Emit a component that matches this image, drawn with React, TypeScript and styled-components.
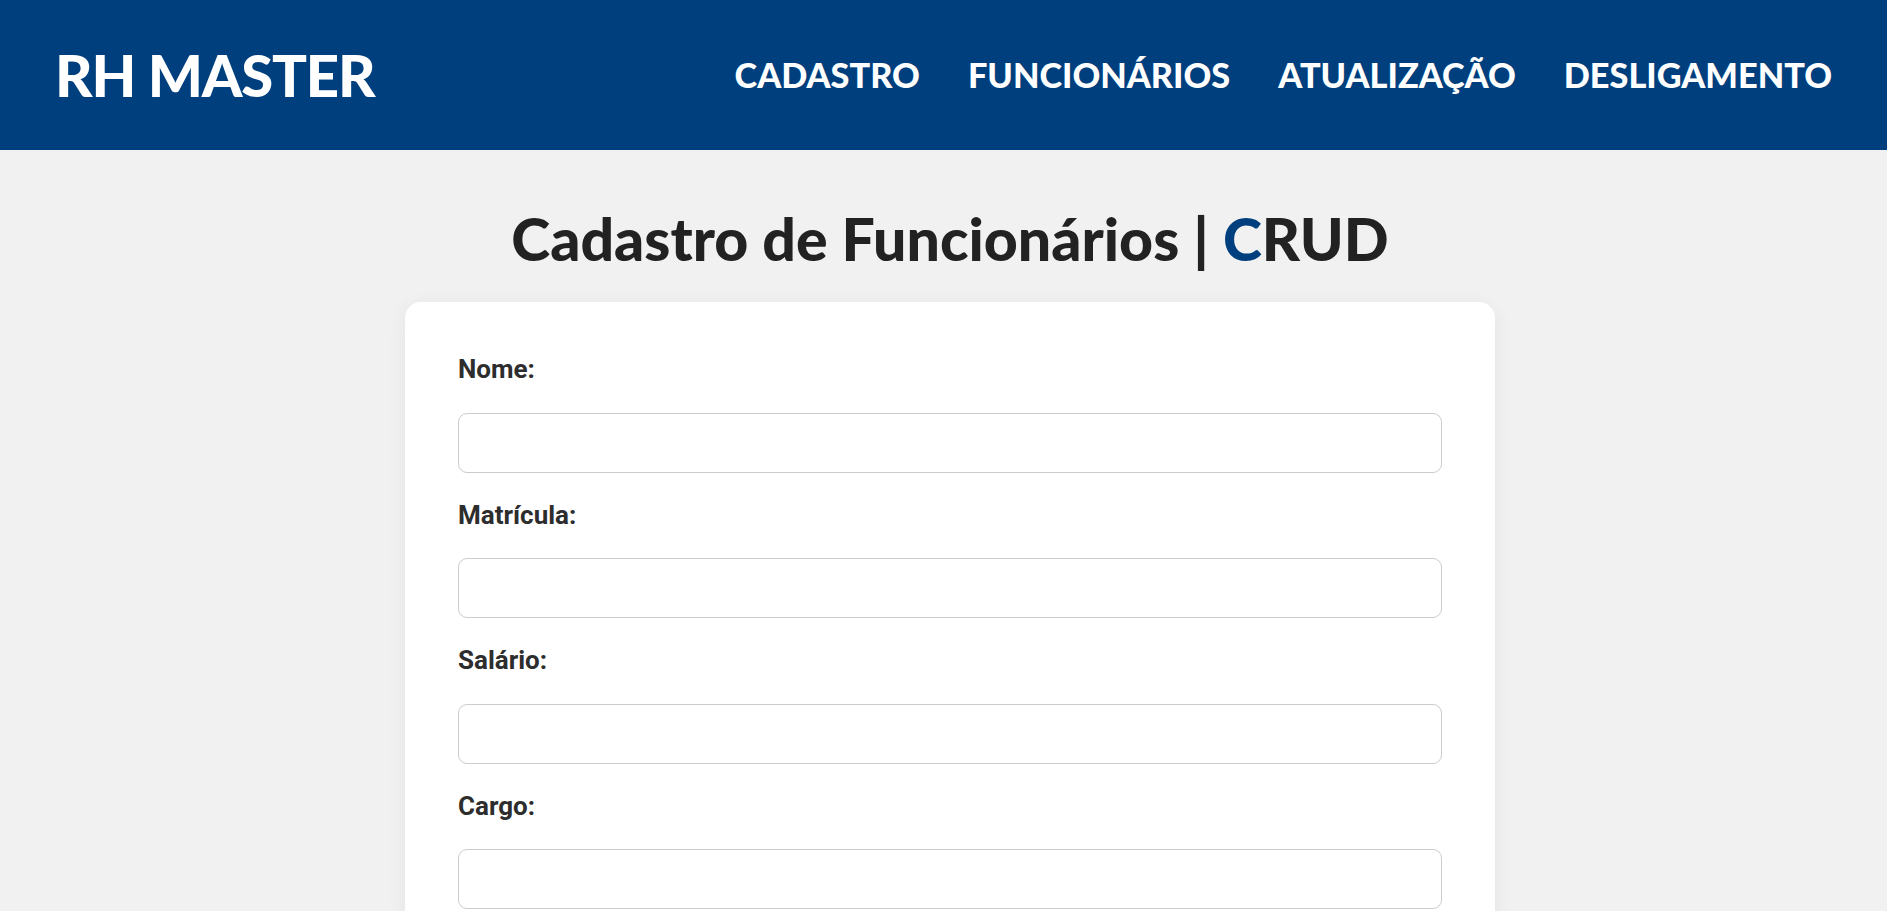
import React from "react";
import styled, { createGlobalStyle } from "styled-components";

const GlobalStyle = createGlobalStyle`
  * { box-sizing: border-box; }
  html, body { margin: 0; padding: 0; }
  body {
    background: #f1f1f1;
    font-family: "Lato", "Open Sans", sans-serif;
    color: #222;
  }
`;

const Header = styled.header`
  height: 150px;
  background: #003f7e;
  display: flex;
  align-items: center;
  justify-content: space-between;
  padding: 0 55px 0 55px;
`;

const Logo = styled.div`
  font-family: "Lato", sans-serif;
  font-weight: 900;
  font-size: 58px;
  color: #fff;
  letter-spacing: -1.2px;
  line-height: 1;
`;

const Nav = styled.nav`
  display: flex;
  align-items: center;
  gap: 48px;
`;

const NavLink = styled.a`
  font-family: "Lato", sans-serif;
  font-weight: 900;
  font-size: 34.3px;
  color: #fff;
  text-decoration: none;
  line-height: 1;
`;

const Main = styled.main`
  padding-left: 13px;
  display: flex;
  flex-direction: column;
  align-items: center;
`;

const Title = styled.h1`
  margin: 55px 0 29px;
  font-family: "Lato", sans-serif;
  font-weight: 900;
  font-size: 59px;
  line-height: 68px;
  color: #222;
`;

const Accent = styled.span`
  color: #003f7e;
`;

const Card = styled.form`
  width: 1090px;
  background: #fff;
  border-radius: 16px;
  box-shadow: 0 4px 20px rgba(0, 0, 0, 0.06);
  padding: 52px 53px 40px;
  display: flex;
  flex-direction: column;
`;

const Field = styled.div`
  display: flex;
  flex-direction: column;
`;

const Label = styled.label`
  display: block;
  font-family: "Roboto", sans-serif;
  font-weight: 700;
  font-size: 26px;
  line-height: 30.5px;
  color: #2d2d2d;
  margin-bottom: 28px;
`;

const Input = styled.input`
  display: block;
  width: 100%;
  height: 60px;
  border: 1px solid #cccccc;
  border-radius: 9px;
  background: #fff;
  margin-bottom: 27px;
  font-family: "Roboto", sans-serif;
  font-size: 22px;
  padding: 0 16px;
  outline: none;
`;

const fields = ["Nome:", "Matrícula:", "Salário:", "Cargo:"];

export default function App() {
  return (
    <>
      <GlobalStyle />
      <Header>
        <Logo>RH MASTER</Logo>
        <Nav>
          <NavLink href="#">CADASTRO</NavLink>
          <NavLink href="#">FUNCIONÁRIOS</NavLink>
          <NavLink href="#">ATUALIZAÇÃO</NavLink>
          <NavLink href="#">DESLIGAMENTO</NavLink>
        </Nav>
      </Header>
      <Main>
        <Title>
          Cadastro de Funcionários | <Accent>C</Accent>RUD
        </Title>
        <Card onSubmit={(e) => e.preventDefault()}>
          {fields.map((f) => (
            <Field key={f}>
              <Label>{f}</Label>
              <Input type="text" />
            </Field>
          ))}
        </Card>
      </Main>
    </>
  );
}
